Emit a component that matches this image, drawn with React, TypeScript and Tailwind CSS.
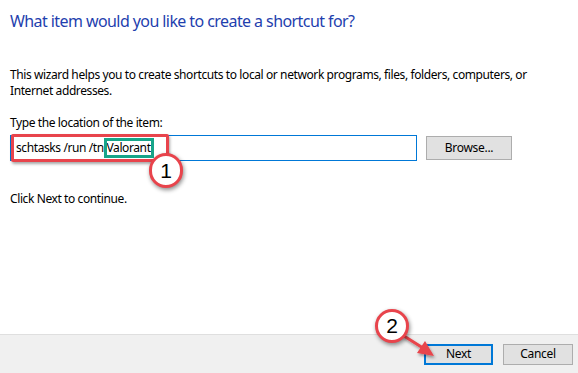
import React from "react";

export default function App() {
  return (
    <div className="relative w-[578px] h-[373px] bg-white flex flex-col overflow-hidden text-black [font-family:'Noto_Sans',sans-serif]">
      <div className="flex-1 pl-[10px] pt-[11px]">
        <div className="text-[16px] leading-[20px] tracking-[-0.58px] text-[#1f3fae]">
          What item would you like to create a shortcut for?
        </div>
        <div className="mt-[36px] text-[12px] leading-[16px] tracking-[-0.4px] text-black">
          <div>This wizard helps you to create shortcuts to local or network programs, files, folders, computers, or</div>
          <div>Internet addresses.</div>
        </div>
        <div className="mt-[16px] text-[12px] leading-[16px] tracking-[-0.4px]">Type the location of the item:</div>
        <div className="mt-[4px] flex items-center gap-[9px]">
          <div className="w-[407px] h-[26px] border border-[#0078d7] flex items-center pl-[5px] text-[12px] tracking-[-0.4px]">
            schtasks /run /tn Valorant
          </div>
          <div className="w-[86px] h-[24px] border border-[#adadad] bg-[#e1e1e1] flex items-center justify-center text-[12px] tracking-[-0.3px]">
            Browse...
          </div>
        </div>
        <div className="mt-[30px] text-[12px] leading-[16px] tracking-[-0.4px]">Click Next to continue.</div>
      </div>
      <div className="h-[39px] border-t border-[#dfdfdf] bg-[#f0f0f0] flex items-center justify-end gap-[10px] pr-[5px]">
        <div className="w-[69px] h-[21px] border-2 border-[#0078d7] bg-[#e1e1e1] flex items-center justify-center text-[12px] tracking-[-0.3px]">
          Next
        </div>
        <div className="w-[70px] h-[21px] border border-[#adadad] bg-[#e1e1e1] flex items-center justify-center text-[12px] tracking-[-0.3px]">
          Cancel
        </div>
      </div>

      {/* annotations */}
      <div className="absolute left-[11px] top-[134px] w-[158px] h-[28px] border-[3px] border-[#e8444c] rounded-[2px] shadow-[1px_2px_3px_rgba(0,0,0,0.35)]" />
      <div className="absolute left-[104px] top-[138px] w-[50px] h-[20px] border-[3px] border-[#17a589]" />
      <div className="absolute left-[149px] top-[153px] w-[34px] h-[35px] rounded-full border-[3px] border-[#e8444c] bg-white shadow-[1px_2px_4px_rgba(0,0,0,0.45)] flex items-center justify-center text-[21px] [font-family:'Liberation_Sans',sans-serif]">
        1
      </div>
      <svg className="absolute left-0 top-0 pointer-events-none" width="578" height="373">
        <defs>
          <filter id="sh" x="-20%" y="-20%" width="140%" height="140%">
            <feDropShadow dx="1" dy="2" stdDeviation="1.5" floodColor="#000" floodOpacity="0.4" />
          </filter>
        </defs>
        <g filter="url(#sh)">
          <line x1="404" y1="336" x2="423" y2="348" stroke="#e8444c" strokeWidth="3" strokeLinecap="round" />
          <polygon points="434,356 417,353 425,341" fill="#e8444c" />
        </g>
      </svg>
      <div className="absolute left-[375px] top-[309px] w-[34px] h-[34px] rounded-full border-[3px] border-[#e8444c] bg-white shadow-[1px_2px_4px_rgba(0,0,0,0.45)] flex items-center justify-center text-[21px] [font-family:'Liberation_Sans',sans-serif]">
        2
      </div>
    </div>
  );
}
